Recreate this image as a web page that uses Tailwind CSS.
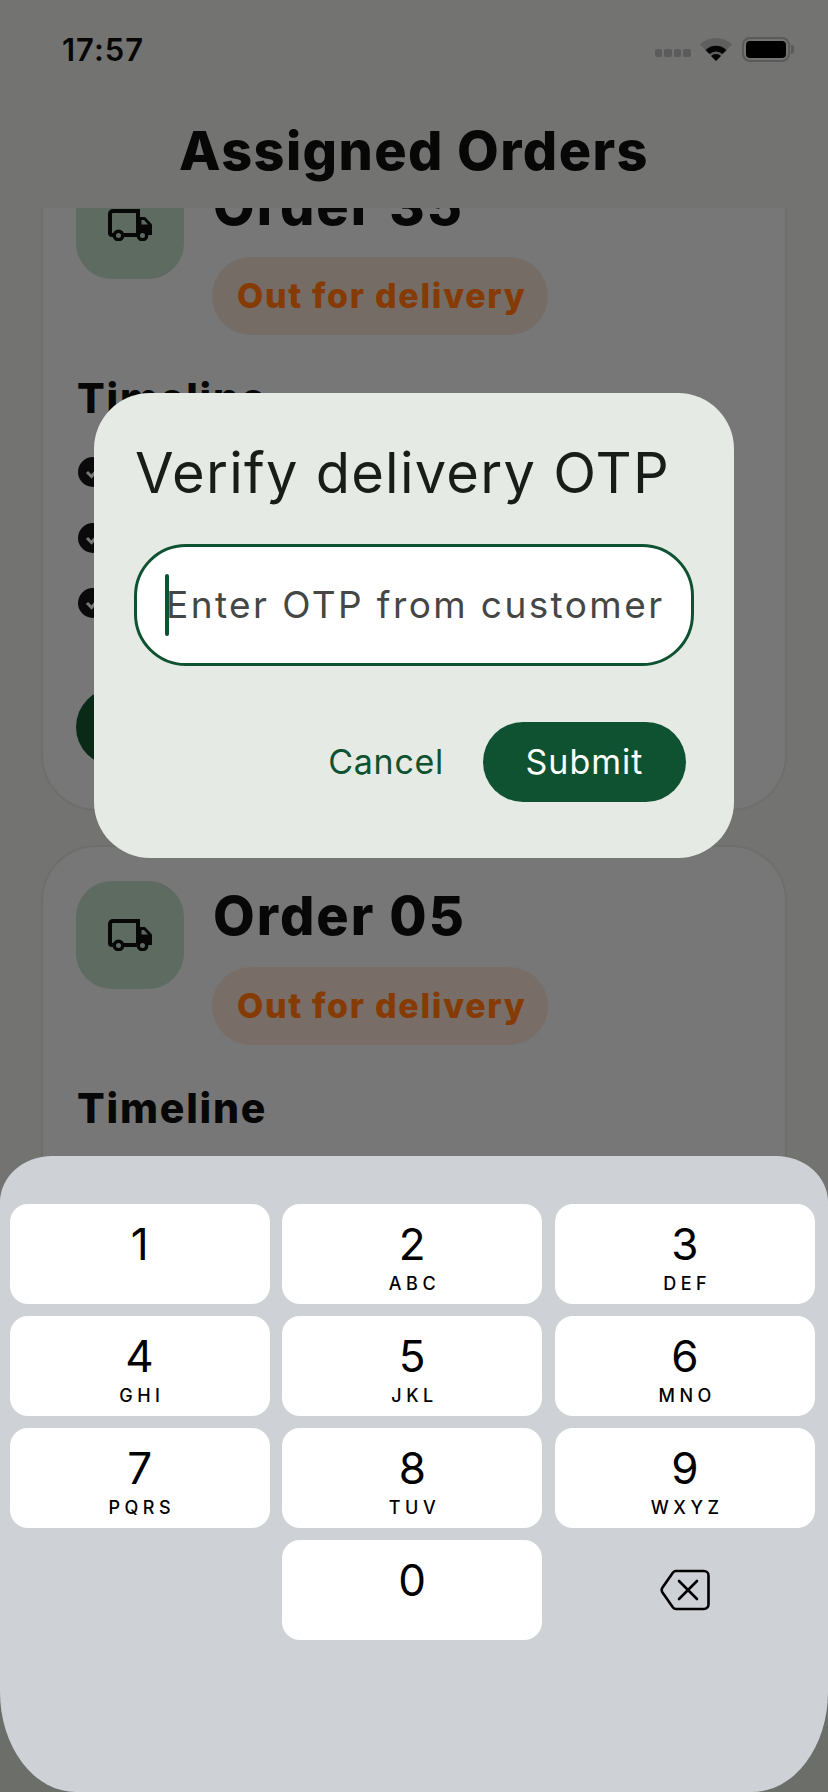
<!DOCTYPE html>
<html>
<head>
<meta charset="utf-8">
<script src="https://cdn.jsdelivr.net/npm/@tailwindcss/browser@4"></script>
</head>
<body class="m-0">
<div class="relative w-[828px] h-[1792px] overflow-hidden bg-[#737372] font-['Inter',sans-serif] text-[#070707]">

  <!-- Header with status bar -->
  <header class="relative z-10 h-[208px] bg-[#737372]">
    <div class="flex items-center justify-between h-[98px] pl-[62px] pr-[34px]">
      <span class="text-[31px] leading-none font-semibold tracking-[1px]">17:57</span>
      <div class="flex items-center">
        <div class="flex gap-[2px] mt-[8px] mr-[9px]">
          <span class="w-[7.5px] h-[8px] rounded-[2px] bg-[#5b5b5b]"></span>
          <span class="w-[7.5px] h-[8px] rounded-[2px] bg-[#5b5b5b]"></span>
          <span class="w-[7.5px] h-[8px] rounded-[2px] bg-[#5b5b5b]"></span>
          <span class="w-[7.5px] h-[8px] rounded-[2px] bg-[#5b5b5b]"></span>
        </div>
        <svg class="mr-[10px]" width="32" height="24" viewBox="0 0 32 24">
          <path d="M16 24 L0 7.5 A23 23 0 0 1 32 7.5 Z" fill="#5f5f5f"/>
          <path d="M5.5 13 A15 15 0 0 1 26.500 13 L22.500 17 A9.500 9.500 0 0 0 9.500 17 Z" fill="#050505"/>
          <path d="M16 24 L11 19 A7 7 0 0 1 21 19 Z" fill="#050505"/>
        </svg>
        <div class="relative flex items-center">
          <div class="w-[48px] h-[25px] rounded-[8px] border-[2.500px] border-[#5a5a5a] p-[2px]">
            <div class="w-full h-full rounded-[4px] bg-black"></div>
          </div>
          <div class="ml-[1.500px] w-[3px] h-[9px] rounded-r-[3px] bg-[#5a5a5a]"></div>
        </div>
      </div>
    </div>
    <h1 class="mt-[23px] text-center text-[54px] leading-[60px] font-extrabold tracking-[1.400px]">Assigned Orders</h1>
  </header>

  <!-- Scrolled list -->
  <main class="h-[1584px] overflow-hidden">
    <div class="-mt-[73px] px-[41px] flex flex-col gap-[34px]">

      <section class="h-[676px] rounded-[56px] border-2 border-[#6e6e6b] bg-[#777777] pt-[34px] px-[33px]">
        <div class="flex">
          <div class="w-[108px] h-[108px] shrink-0 rounded-[36px] bg-[#5d6b60] flex items-center justify-center">
            <svg width="44" height="32" viewBox="0 0 44 32">
              <path d="M6 26 H4 A2 2 0 0 1 2 24 V5 A3 3 0 0 1 5 2 H30 V26 H15" fill="none" stroke="#070707" stroke-width="4"/>
              <path d="M30 8 H37 L44 15.500 V26 H30 Z" fill="#070707"/>
              <path d="M33.500 11 H36 L40 15.500 H33.500 Z" fill="#5d6b60"/>
              <circle cx="10.500" cy="26.500" r="4.200" fill="#5d6b60" stroke="#070707" stroke-width="3.400"/>
              <circle cx="34.500" cy="26.500" r="4.200" fill="#5d6b60" stroke="#070707" stroke-width="3.400"/>
            </svg>
          </div>
          <div class="ml-[28px] flex flex-col items-start">
            <h2 class="ml-[1px] text-[54px] leading-[60px] font-extrabold tracking-[2px] mt-[5px]">Order 35</h2>
            <span class="mt-[21px] h-[78px] w-[336px] pl-[25px] rounded-full bg-[#766c66] text-[#853b03] text-[34px] font-extrabold tracking-[1.700px] leading-[78px] whitespace-nowrap">Out for delivery</span>
          </div>
        </div>
        <h3 class="mt-[39px] ml-[1px] text-[41px] leading-[48px] font-extrabold tracking-[1.800px]">Timeline</h3>
        <ul class="mt-[35px] flex flex-col gap-[35.500px]">
          <li class="w-[30px] h-[30px] ml-[2px] rounded-full bg-[#0a0a0a] flex items-center justify-center"><svg width="18" height="18" viewBox="0 0 18 18"><path d="M3 9 L7.500 13.500 L15 5" fill="none" stroke="#777777" stroke-width="3"/></svg></li>
          <li class="w-[30px] h-[30px] ml-[2px] rounded-full bg-[#0a0a0a] flex items-center justify-center"><svg width="18" height="18" viewBox="0 0 18 18"><path d="M3 9 L7.500 13.500 L15 5" fill="none" stroke="#777777" stroke-width="3"/></svg></li>
          <li class="w-[30px] h-[30px] ml-[2px] rounded-full bg-[#0a0a0a] flex items-center justify-center"><svg width="18" height="18" viewBox="0 0 18 18"><path d="M3 9 L7.500 13.500 L15 5" fill="none" stroke="#777777" stroke-width="3"/></svg></li>
        </ul>
        <div class="mt-[70px] w-[400px] h-[78px] rounded-full bg-[#0a2917]"></div>
      </section>

      <section class="h-[676px] rounded-[56px] border-2 border-[#6e6e6b] bg-[#777777] pt-[34px] px-[33px]">
        <div class="flex">
          <div class="w-[108px] h-[108px] shrink-0 rounded-[36px] bg-[#5d6b60] flex items-center justify-center">
            <svg width="44" height="32" viewBox="0 0 44 32">
              <path d="M6 26 H4 A2 2 0 0 1 2 24 V5 A3 3 0 0 1 5 2 H30 V26 H15" fill="none" stroke="#070707" stroke-width="4"/>
              <path d="M30 8 H37 L44 15.500 V26 H30 Z" fill="#070707"/>
              <path d="M33.500 11 H36 L40 15.500 H33.500 Z" fill="#5d6b60"/>
              <circle cx="10.500" cy="26.500" r="4.200" fill="#5d6b60" stroke="#070707" stroke-width="3.400"/>
              <circle cx="34.500" cy="26.500" r="4.200" fill="#5d6b60" stroke="#070707" stroke-width="3.400"/>
            </svg>
          </div>
          <div class="ml-[28px] flex flex-col items-start">
            <h2 class="ml-[1px] text-[54px] leading-[60px] font-extrabold tracking-[2px] mt-[5px]">Order 05</h2>
            <span class="mt-[21px] h-[78px] w-[336px] pl-[25px] rounded-full bg-[#786d67] text-[#853b03] text-[34px] font-extrabold tracking-[1.700px] leading-[78px] whitespace-nowrap">Out for delivery</span>
          </div>
        </div>
        <h3 class="mt-[39px] ml-[1px] text-[41px] leading-[48px] font-extrabold tracking-[1.800px]">Timeline</h3>
      </section>
    </div>
  </main>

  <!-- OTP dialog -->
  <div class="absolute z-20 left-[94px] top-[393px] w-[640px] h-[465px] rounded-[56px] bg-[#e5ebe4] px-[41px] pt-[46px]">
    <h2 class="text-[56px] leading-[68px] font-normal tracking-[1.250px] text-[#191c19]">Verify delivery OTP</h2>
    <div class="mt-[37px] -ml-[1px] relative h-[122px] w-[560px] rounded-[52px] border-[3px] border-[#0f5232] bg-white pl-[29px] flex items-center">
      <span class="absolute left-[28px] top-[27px] w-[4px] h-[62px] rounded-full bg-[#0f5232]"></span>
      <span class="text-[37px] leading-[44px] tracking-[2.400px] text-[#444744]">Enter OTP from customer</span>
    </div>
    <div class="mt-[56px] flex items-center justify-end pr-[7px]">
      <span class="text-[34px] leading-[40px] tracking-[0.700px] text-[#0f5232] mr-[39px]">Cancel</span>
      <span class="w-[203px] h-[80px] rounded-full bg-[#0f5232] text-white text-[34px] leading-[80px] tracking-[1px] text-center">Submit</span>
    </div>
  </div>

  <!-- Darker strip visible behind the keyboard's bottom corners -->
  <div class="absolute z-20 left-0 bottom-0 w-[828px] h-[120px] bg-[#6c6e6a]"></div>

  <!-- Numeric keyboard -->
  <div class="absolute z-30 left-0 top-[1156px] w-[828px] h-[636px] rounded-[52px_52px_76px_76px/46px_46px_100px_100px] bg-[#ced1d6] pt-[48px] pl-[9.500px] pr-[13px]">
    <div class="grid grid-cols-3 gap-x-[12.500px] gap-y-[12px] text-black">
      <div class="h-[100px] rounded-[18px] bg-white flex flex-col items-center pt-[14px]"><span class="text-[44px] leading-[52px]">1</span></div>
      <div class="h-[100px] rounded-[18px] bg-white flex flex-col items-center pt-[14px]"><span class="text-[44px] leading-[52px]">2</span><span class="mt-[2px] text-[18px] leading-[24px] font-medium tracking-[4.500px] pl-[4.500px]">ABC</span></div>
      <div class="h-[100px] rounded-[18px] bg-white flex flex-col items-center pt-[14px]"><span class="text-[44px] leading-[52px]">3</span><span class="mt-[2px] text-[18px] leading-[24px] font-medium tracking-[4.500px] pl-[4.500px]">DEF</span></div>
      <div class="h-[100px] rounded-[18px] bg-white flex flex-col items-center pt-[14px]"><span class="text-[44px] leading-[52px]">4</span><span class="mt-[2px] text-[18px] leading-[24px] font-medium tracking-[4.500px] pl-[4.500px]">GHI</span></div>
      <div class="h-[100px] rounded-[18px] bg-white flex flex-col items-center pt-[14px]"><span class="text-[44px] leading-[52px]">5</span><span class="mt-[2px] text-[18px] leading-[24px] font-medium tracking-[4.500px] pl-[4.500px]">JKL</span></div>
      <div class="h-[100px] rounded-[18px] bg-white flex flex-col items-center pt-[14px]"><span class="text-[44px] leading-[52px]">6</span><span class="mt-[2px] text-[18px] leading-[24px] font-medium tracking-[4.500px] pl-[4.500px]">MNO</span></div>
      <div class="h-[100px] rounded-[18px] bg-white flex flex-col items-center pt-[14px]"><span class="text-[44px] leading-[52px]">7</span><span class="mt-[2px] text-[18px] leading-[24px] font-medium tracking-[4.500px] pl-[4.500px]">PQRS</span></div>
      <div class="h-[100px] rounded-[18px] bg-white flex flex-col items-center pt-[14px]"><span class="text-[44px] leading-[52px]">8</span><span class="mt-[2px] text-[18px] leading-[24px] font-medium tracking-[4.500px] pl-[4.500px]">TUV</span></div>
      <div class="h-[100px] rounded-[18px] bg-white flex flex-col items-center pt-[14px]"><span class="text-[44px] leading-[52px]">9</span><span class="mt-[2px] text-[18px] leading-[24px] font-medium tracking-[4.500px] pl-[4.500px]">WXYZ</span></div>
      <div class="h-[100px]"></div>
      <div class="h-[100px] rounded-[18px] bg-white flex flex-col items-center pt-[14px]"><span class="text-[44px] leading-[52px]">0</span></div>
      <div class="h-[100px] flex items-center justify-center">
        <svg width="50" height="42" viewBox="0 0 50 42" fill="none" stroke="#000" stroke-width="2.600" stroke-linejoin="round" stroke-linecap="round">
          <path d="M16 2 H44 A4.500 4.500 0 0 1 48.500 6.500 V35.500 A4.500 4.500 0 0 1 44 40 H16 A4 4 0 0 1 13 38.500 L2.500 23.500 A4.500 4.500 0 0 1 2.500 18.500 L13 3.500 A4 4 0 0 1 16 2 Z"/>
          <path d="M19 12 L37 30 M37 12 L19 30"/>
        </svg>
      </div>
    </div>
  </div>
</div>
</body>
</html>
